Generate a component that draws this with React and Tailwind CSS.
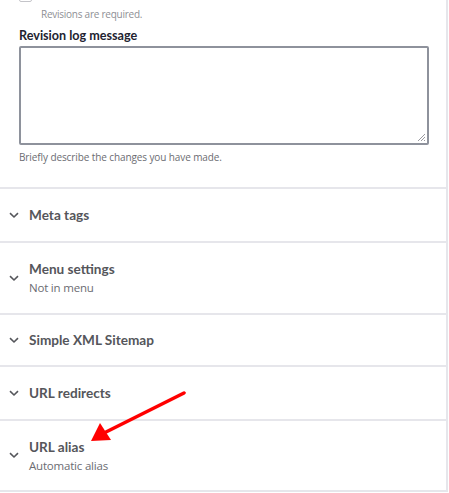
import React from 'react';

const font = { fontFamily: '"Open Sans", "Noto Sans", sans-serif' };
const headFont = { fontFamily: 'Lato, "Open Sans", sans-serif' };

function Chevron() {
  return (
    <svg width="10" height="7" viewBox="0 0 10 7" className="shrink-0">
      <path d="M1 1.2 L5 5 L9 1.2" fill="none" stroke="#55565b" strokeWidth="1.6" />
    </svg>
  );
}

function Section({ title, summary, className }) {
  return (
    <div className={`flex items-center gap-[10px] border-t-2 border-[#e6e6eb] pl-[9px] ${className}`}>
      <Chevron />
      <div>
        <div className="text-[13.6px] leading-[18px] font-bold text-[#55565b]" style={headFont}>{title}</div>
        {summary && (
          <div className="text-[11.5px] leading-[16px] text-[#6b6c72] mt-[2px] tracking-[-0.2px]">{summary}</div>
        )}
      </div>
    </div>
  );
}

export default function App() {
  return (
    <div className="relative w-[449px] h-[493px] bg-white overflow-hidden" style={font}>
      <div className="w-[448px] border-r-2 border-b-2 border-[#e6e6eb]">
        {/* revision fields */}
        <div className="relative h-[187px] px-[19px]">
          <div className="absolute left-[19px] -top-[12px] w-[13px] h-[14px] border border-[#c4c4c9] rounded-[2px]" />
          <div className="pt-[8px] pl-[22px] text-[10px] leading-[13px] text-[#8e8f95] tracking-[-0.25px]">
            Revisions are required.
          </div>
          <div className="mt-[6px] text-[12.6px] leading-[17px] font-bold text-[#222330]" style={headFont}>
            Revision log message
          </div>
          <div className="relative mt-[2px] w-[410px] h-[99px] border-2 border-[#8e929c] rounded-[2px]">
            <svg width="10" height="10" viewBox="0 0 10 10" className="absolute right-[1px] bottom-[1px]">
              <path d="M9 2 L2 9 M9 5 L5 9 M9 8 L8 9" stroke="#9a9aa0" strokeWidth="1" />
            </svg>
          </div>
          <div className="mt-[6px] text-[10px] leading-[13px] text-[#6b6c72] tracking-[-0.1px]">
            Briefly describe the changes you have made.
          </div>
        </div>

        <Section title="Meta tags" className="h-[54px]" />
        <Section title="Menu settings" summary="Not in menu" className="h-[72px]" />
        <Section title="Simple XML Sitemap" className="h-[52px]" />
        <Section title="URL redirects" className="h-[54px]" />
        <Section title="URL alias" summary="Automatic alias" className="h-[71px]" />
      </div>

      <svg className="absolute left-0 top-0" width="449" height="493" viewBox="0 0 449 493">
        <line x1="184" y1="393" x2="106" y2="432" stroke="#f00" strokeWidth="3.5" strokeLinecap="round" />
        <polygon points="91,441 100,423 111,440" fill="#f00" />
      </svg>
    </div>
  );
}
